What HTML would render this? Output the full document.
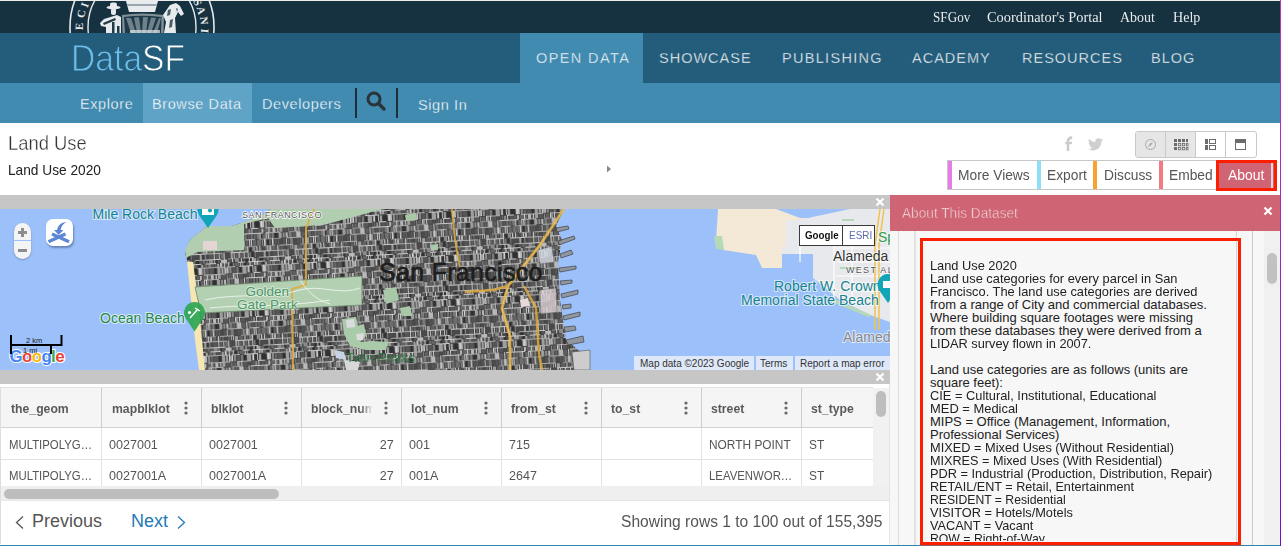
<!DOCTYPE html>
<html><head><meta charset="utf-8">
<style>
*{margin:0;padding:0;box-sizing:border-box}
html,body{width:1281px;height:546px;overflow:hidden;background:#fff}
body{position:relative;font-family:"Liberation Sans",sans-serif}
.a{position:absolute;white-space:nowrap}
#top{left:0;top:0;width:1281px;height:33px;background:#16313f}
#topline{left:0;top:0;width:1281px;height:1px;background:#e9ecee}
.tl{position:absolute;top:6px;font-family:"Liberation Serif",serif;font-size:15.3px;color:#e8ecef;line-height:22px;transform:scaleX(0.86);transform-origin:0 0}
#bar{left:0;top:33px;width:1281px;height:50px;background:#245d7b}
#sub{left:0;top:83px;width:1281px;height:40px;background:#418ab0}
.nav{position:absolute;top:49px;font-size:14.5px;letter-spacing:1.0px;color:#ffffff;line-height:18px;-webkit-text-stroke:0.35px #245d7b}
.hd{position:absolute;top:401px;font-size:13px;line-height:15px;font-weight:bold;color:#5a5a5a;overflow:hidden;white-space:nowrap;transform:scaleX(0.94);transform-origin:0 0}
.cl{position:absolute;font-size:13px;line-height:15px;color:#555;white-space:nowrap;transform-origin:0 0}
.cp{transform:scaleX(0.915)}
.el{transform:scaleX(0.875)}
.dg{transform:scaleX(0.965)}
.sn{position:absolute;top:95px;font-size:14.5px;letter-spacing:0.6px;color:#ffffff;line-height:18px;-webkit-text-stroke:0.3px #418ab0}
</style></head><body>
<div class="a" id="top"></div>

<!-- seal -->
<svg class="a" style="left:60px;top:1px" width="170" height="32" viewBox="60 1 170 32">
  <g fill="none" stroke="#e6eaec">
    <circle cx="142" cy="27" r="72" stroke-width="1.6"/>
    <circle cx="142" cy="27" r="54" stroke-width="1.4"/>
  </g>
  <g font-family="Liberation Serif" font-size="11" font-weight="bold" fill="#e6eaec" text-anchor="middle">
    <text transform="translate(79.5 26.5) rotate(-88)" y="3.5">E</text>
    <text transform="translate(81.5 14) rotate(-78)" y="3.5">C</text>
    <text transform="translate(85 5) rotate(-70)" y="3.5">I</text>
    <text transform="translate(197.5 2.5) rotate(67)" y="3.5">S</text>
    <text transform="translate(201 10.5) rotate(75)" y="3.5">A</text>
    <text transform="translate(204 20.5) rotate(84)" y="3.5">N</text>
    <text transform="translate(204.5 31) rotate(94)" y="3.5">I</text>
  </g>
  <!-- crown -->
  <path d="M126 1 L158 1 L155 12 L129 12Z" fill="#e9ecee"/>
  <path d="M127 4 L157 4 L156.5 6 L127.5 6Z" fill="#9aa6ad"/>
  <!-- shield -->
  <path d="M122 15 Q142 12 164 15 L163.5 33 L122.5 33Z" fill="#7f9099"/>
  <path d="M124 17 Q142 14.5 161.5 17 L161 33 L125 33Z" fill="#1f3a48"/>
  <g fill="#6f828c">
    <path d="M126 18 L131 18 L136 33 L131 33Z"/>
    <path d="M134 17.5 L139 17.2 L141 33 L137 33Z"/>
    <path d="M143 17 L148 17.2 L146 33 L142 33Z"/>
    <path d="M151 17.5 L156 18 L151 33 L147 33Z"/>
    <path d="M159 18 L161 18.5 L157 33 L153 33Z"/>
  </g>
  <path d="M130 30 L160 30 L160 33 L130 33Z" fill="#dfe4e7" opacity="0.7"/>
  <!-- left figure -->
  <g fill="#e6eaec">
    <ellipse cx="113.5" cy="7.5" rx="7" ry="1.8"/>
    <rect x="110" y="2.5" width="7" height="5" rx="2"/>
    <rect x="111" y="8" width="5" height="7" rx="2"/>
    <path d="M104 19 L117 15 L121 17 L121 33 L106 33 L106 27 L101 26 L100 23Z"/>
  </g>
  <g fill="#1f3a48">
    <path d="M103 23 L115 18 L116 20 L104 25Z"/>
    <rect x="112" y="22" width="2.5" height="11"/>
    <rect x="117" y="26" width="2.5" height="7"/>
  </g>
  <!-- right figure -->
  <g fill="#e6eaec">
    <path d="M163 15 L170 5 L176 3 L180 6 L184 14 L181 16 L178 12 L175 18 L176 33 L164 33 L166 22Z"/>
  </g>
  <g fill="#1f3a48" opacity="0.8">
    <path d="M168 10 L171 9 L170 15 L167 16Z"/>
    <path d="M176 8 L178 9 L177 12Z"/>
    <path d="M170 20 L173 19 L172 27 L169 28Z"/>
  </g>
</svg>
<span class="tl" style="left:933px">SFGov</span>
<span class="tl" style="left:987px;transform:scaleX(0.94)">Coordinator's Portal</span>
<span class="tl" style="left:1120px;transform:scaleX(0.91)">About</span>
<span class="tl" style="left:1173px;transform:scaleX(0.92)">Help</span>

<div class="a" id="bar"></div>
<div class="a" style="left:520px;top:33px;width:123px;height:50px;background:#418ab0"></div>
<span class="a" style="left:71px;top:37px;font-size:36px;line-height:44px;color:#6cbde8;transform:scaleX(0.935);transform-origin:0 0;-webkit-text-stroke:0.9px #245d7b">Data<span style="color:#fff">SF</span></span>
<span class="nav" style="left:536px;letter-spacing:1.4px;-webkit-text-stroke:0.35px #418ab0">OPEN DATA</span>
<span class="nav" style="left:659px">SHOWCASE</span>
<span class="nav" style="left:782px;letter-spacing:1.3px">PUBLISHING</span>
<span class="nav" style="left:912px">ACADEMY</span>
<span class="nav" style="left:1022px">RESOURCES</span>
<span class="nav" style="left:1151px">BLOG</span>

<div class="a" id="sub"></div>
<div class="a" style="left:143px;top:83px;width:109px;height:40px;background:#5fa3c6"></div>
<span class="sn" style="left:80px">Explore</span>
<span class="sn" style="left:152px;-webkit-text-stroke:0.3px #5fa3c6">Browse Data</span>
<span class="sn" style="left:262px">Developers</span>
<div class="a" style="left:355px;top:88px;width:2px;height:30px;background:#1d2f38"></div>
<div class="a" style="left:396px;top:88px;width:2px;height:30px;background:#1d2f38"></div>
<svg class="a" style="left:366px;top:91px" width="21" height="20" viewBox="0 0 21 20">
  <circle cx="8" cy="8" r="6" fill="none" stroke="#2a3338" stroke-width="3"/>
  <line x1="12.5" y1="12.5" x2="18" y2="18" stroke="#2a3338" stroke-width="3.2" stroke-linecap="round"/>
</svg>
<span class="sn" style="left:418px;top:96px">Sign In</span>


<!-- title -->
<span class="a" style="left:8px;top:132px;font-size:20.8px;line-height:22px;color:#333;-webkit-text-stroke:0.35px #fff;transform:scaleX(0.885);transform-origin:0 0">Land Use</span>
<span class="a" style="left:8px;top:160.5px;font-size:14.5px;line-height:18px;color:#222;transform:scaleX(0.945);transform-origin:0 0">Land Use 2020</span>
<svg class="a" style="left:606px;top:165px" width="6" height="8"><path d="M1 0.5 L5 4 L1 7.5Z" fill="#8a8a8a"/></svg>

<!-- share icons -->
<svg class="a" style="left:1064px;top:136px" width="10" height="16" viewBox="0 0 10 16"><path d="M4 15 L4 5.5 C4 2.8 5.3 1.6 8.2 1.6" fill="none" stroke="#cccccc" stroke-width="2.6"/><path d="M1.2 7 L8 7" stroke="#cccccc" stroke-width="2.4"/></svg>
<svg class="a" style="left:1088px;top:138px" width="15" height="13" viewBox="0 0 24 20"><path fill="#cfcfcf" d="M24 2.4c-.9.4-1.8.6-2.8.8 1-.6 1.8-1.6 2.2-2.7-1 .6-2 1-3.1 1.2C19.4.7 18.1 0 16.6 0c-2.7 0-4.9 2.2-4.9 4.9 0 .4 0 .8.1 1.1C7.7 5.8 4.1 3.9 1.7.9c-.4.7-.7 1.6-.7 2.5 0 1.7.9 3.2 2.2 4.1-.8 0-1.6-.2-2.2-.6v.1c0 2.4 1.7 4.4 3.9 4.8-.4.1-.8.2-1.3.2-.3 0-.6 0-.9-.1.6 2 2.4 3.4 4.6 3.4-1.7 1.3-3.8 2.1-6.1 2.1-.4 0-.8 0-1.2-.1 2.2 1.4 4.8 2.2 7.5 2.2 9.1 0 14-7.5 14-14v-.6c1-.7 1.8-1.6 2.5-2.5z"/></svg>

<!-- view toggles -->
<div class="a" style="left:1135px;top:131px;width:122px;height:27px;border:1px solid #c9c9c9;border-radius:3px;background:#fff;overflow:hidden">
  <div class="a" style="left:0;top:0;width:30px;height:25px;background:#e6e6e6;border-right:1px solid #c9c9c9"></div>
  <div class="a" style="left:30px;top:0;width:30px;height:25px;background:#e6e6e6;border-right:1px solid #c9c9c9"></div>
  <div class="a" style="left:60px;top:0;width:30px;height:25px;border-right:1px solid #c9c9c9"></div>
</div>
<svg class="a" style="left:1135px;top:131px" width="122" height="27" viewBox="1135 131 122 27">
  <g fill="none" stroke="#a9a9a9" stroke-width="1">
    <circle cx="1150.5" cy="144.5" r="5"/>
  </g>
  <path d="M1153 142 L1151 145.5 L1148 147 L1150 143.5Z" fill="#a9a9a9"/>
  <g fill="#6b6b6b">
    <rect x="1174" y="139" width="3" height="3"/><rect x="1178" y="139" width="3" height="3"/><rect x="1182" y="139" width="3" height="3"/><rect x="1186" y="139" width="2" height="3"/>
    <rect x="1174" y="143" width="3" height="3"/><rect x="1174" y="147" width="3" height="3"/>
  </g>
  <g fill="none" stroke="#6b6b6b" stroke-width="0.8">
    <rect x="1178.4" y="143.4" width="2.4" height="2.4"/><rect x="1182.4" y="143.4" width="2.4" height="2.4"/><rect x="1186.4" y="143.4" width="1.6" height="2.4"/>
    <rect x="1178.4" y="147.4" width="2.4" height="2.4"/><rect x="1182.4" y="147.4" width="2.4" height="2.4"/><rect x="1186.4" y="147.4" width="1.6" height="2.4"/>
  </g>
  <g fill="#6b6b6b"><rect x="1205" y="139" width="3" height="5"/><rect x="1205" y="145" width="3" height="5"/></g>
  <g fill="none" stroke="#6b6b6b" stroke-width="1"><rect x="1209.5" y="139.5" width="6" height="4"/><rect x="1209.5" y="145.5" width="6" height="4"/></g>
  <rect x="1235" y="139" width="11" height="3" fill="#6b6b6b"/>
  <rect x="1235.5" y="142.5" width="10" height="7" fill="none" stroke="#6b6b6b" stroke-width="1"/>
</svg>

<!-- action buttons -->
<div class="a" style="left:947px;top:160px;width:330px;height:30px;border:1px solid #c6c6c6;background:#fff"></div>
<div class="a" style="left:948px;top:161px;width:4px;height:28px;background:#e67de6"></div>
<div class="a" style="left:1037px;top:161px;width:4px;height:28px;background:#8de0f7"></div>
<div class="a" style="left:1093px;top:161px;width:4px;height:28px;background:#f7a233"></div>
<div class="a" style="left:1159px;top:161px;width:4px;height:28px;background:#f27a80"></div>
<span class="a" style="left:958px;top:166px;font-size:14.5px;line-height:18px;color:#555;transform:scaleX(0.95);transform-origin:0 0">More Views</span>
<span class="a" style="left:1047px;top:166px;font-size:14.5px;line-height:18px;color:#555;transform:scaleX(0.95);transform-origin:0 0">Export</span>
<span class="a" style="left:1104px;top:166px;font-size:14.5px;line-height:18px;color:#555;transform:scaleX(0.95);transform-origin:0 0">Discuss</span>
<span class="a" style="left:1169px;top:166px;font-size:14.5px;line-height:18px;color:#555;transform:scaleX(0.95);transform-origin:0 0">Embed</span>
<div class="a" style="left:1216px;top:160px;width:61px;height:31px;border:3px solid #fb1f00;background:#cf6574"></div>
<div class="a" style="left:1271px;top:163px;width:2px;height:25px;background:#d9d9d9"></div>
<span class="a" style="left:1228px;top:166px;font-size:14.5px;line-height:18px;color:#fff;transform:scaleX(0.96);transform-origin:0 0">About</span>


<!-- grey bars -->
<div class="a" style="left:0;top:195px;width:890px;height:14px;background:#c6c6c6"></div>
<div class="a" style="left:0;top:370px;width:890px;height:14px;background:#c6c6c6"></div>
<svg class="a" style="left:875px;top:197px" width="10" height="10" viewBox="0 0 10 10"><path d="M1.5 1.5L8.5 8.5M8.5 1.5L1.5 8.5" stroke="#fff" stroke-width="2.2"/></svg>
<svg class="a" style="left:875px;top:372px" width="10" height="10" viewBox="0 0 10 10"><path d="M1.5 1.5L8.5 8.5M8.5 1.5L1.5 8.5" stroke="#fff" stroke-width="2.2"/></svg>

<!-- map -->
<svg class="a" style="left:0;top:209px" width="890" height="161" viewBox="0 209 890 161">
  <defs>
    <pattern id="grid" width="64" height="44" patternUnits="userSpaceOnUse" patternTransform="rotate(-3)"><rect width="64" height="44" fill="#474747"/><rect x="0" y="0" width="17" height="1" fill="#d4d4d4" opacity="0.7"/><rect x="25" y="0" width="17" height="1" fill="#d4d4d4" opacity="0.9"/><rect x="49" y="0" width="20" height="1" fill="#d4d4d4" opacity="0.9"/><rect x="0" y="1" width="2" height="5" fill="#4a4a4a"/><rect x="3" y="1" width="4" height="5" fill="#565656"/><rect x="8" y="1" width="1" height="5" fill="#6e6e6e"/><rect x="10" y="1" width="2" height="5" fill="#606060"/><rect x="13" y="1" width="1" height="5" fill="#b8b8b8"/><rect x="15" y="1" width="3" height="5" fill="#6e6e6e"/><rect x="19" y="1" width="3" height="5" fill="#4a4a4a"/><rect x="23" y="1" width="1" height="5" fill="#4a4a4a"/><rect x="25" y="1" width="2" height="5" fill="#9e9e9e"/><rect x="28" y="1" width="1" height="5" fill="#b8b8b8"/><rect x="30" y="1" width="1" height="5" fill="#6e6e6e"/><rect x="32" y="1" width="1" height="5" fill="#666666"/><rect x="34" y="1" width="3" height="5" fill="#606060"/><rect x="38" y="1" width="1" height="5" fill="#8a8a8a"/><rect x="40" y="1" width="1" height="5" fill="#565656"/><rect x="42" y="1" width="1" height="5" fill="#4a4a4a"/><rect x="44" y="1" width="1" height="5" fill="#8a8a8a"/><rect x="46" y="1" width="2" height="5" fill="#303030"/><rect x="49" y="1" width="1" height="5" fill="#7a7a7a"/><rect x="51" y="1" width="4" height="5" fill="#4a4a4a"/><rect x="56" y="1" width="1" height="5" fill="#4a4a4a"/><rect x="58" y="1" width="2" height="5" fill="#9e9e9e"/><rect x="61" y="1" width="1" height="5" fill="#303030"/><rect x="63" y="1" width="2" height="5" fill="#8a8a8a"/><rect x="18" y="0" width="1" height="6" fill="#dcdcdc" opacity="0.8"/><rect x="33" y="0" width="1" height="6" fill="#dcdcdc" opacity="0.8"/><rect x="8" y="0" width="1" height="6" fill="#dcdcdc" opacity="0.8"/><rect x="42" y="0" width="1" height="6" fill="#dcdcdc" opacity="0.8"/><rect x="38" y="0" width="1" height="6" fill="#dcdcdc" opacity="0.8"/><rect x="0" y="6" width="15" height="1" fill="#d4d4d4" opacity="0.9"/><rect x="22" y="6" width="11" height="1" fill="#d4d4d4" opacity="0.5"/><rect x="37" y="6" width="11" height="1" fill="#d4d4d4" opacity="0.7"/><rect x="53" y="6" width="17" height="1" fill="#d4d4d4" opacity="0.7"/><rect x="0" y="7" width="2" height="3" fill="#606060"/><rect x="3" y="7" width="4" height="3" fill="#8a8a8a"/><rect x="8" y="7" width="1" height="3" fill="#9e9e9e"/><rect x="10" y="7" width="1" height="3" fill="#303030"/><rect x="12" y="7" width="2" height="3" fill="#565656"/><rect x="15" y="7" width="3" height="3" fill="#b8b8b8"/><rect x="19" y="7" width="2" height="3" fill="#b8b8b8"/><rect x="22" y="7" width="3" height="3" fill="#565656"/><rect x="26" y="7" width="2" height="3" fill="#565656"/><rect x="29" y="7" width="4" height="3" fill="#8a8a8a"/><rect x="34" y="7" width="3" height="3" fill="#4a4a4a"/><rect x="38" y="7" width="1" height="3" fill="#4a4a4a"/><rect x="40" y="7" width="2" height="3" fill="#303030"/><rect x="43" y="7" width="3" height="3" fill="#303030"/><rect x="47" y="7" width="3" height="3" fill="#9e9e9e"/><rect x="51" y="7" width="2" height="3" fill="#6e6e6e"/><rect x="54" y="7" width="3" height="3" fill="#303030"/><rect x="58" y="7" width="2" height="3" fill="#565656"/><rect x="61" y="7" width="2" height="3" fill="#6e6e6e"/><rect x="26" y="6" width="1" height="4" fill="#dcdcdc" opacity="0.8"/><rect x="43" y="6" width="1" height="4" fill="#dcdcdc" opacity="0.8"/><rect x="46" y="6" width="1" height="4" fill="#dcdcdc" opacity="0.8"/><rect x="18" y="6" width="1" height="4" fill="#dcdcdc" opacity="0.8"/><rect x="35" y="6" width="1" height="4" fill="#dcdcdc" opacity="0.8"/><rect x="0" y="10" width="10" height="1" fill="#d4d4d4" opacity="0.9"/><rect x="14" y="10" width="10" height="1" fill="#d4d4d4" opacity="0.5"/><rect x="32" y="10" width="7" height="1" fill="#d4d4d4" opacity="0.9"/><rect x="42" y="10" width="17" height="1" fill="#d4d4d4" opacity="0.9"/><rect x="63" y="10" width="13" height="1" fill="#d4d4d4" opacity="0.5"/><rect x="0" y="11" width="1" height="3" fill="#6e6e6e"/><rect x="2" y="11" width="3" height="3" fill="#7a7a7a"/><rect x="6" y="11" width="2" height="3" fill="#565656"/><rect x="9" y="11" width="1" height="3" fill="#666666"/><rect x="11" y="11" width="2" height="3" fill="#9e9e9e"/><rect x="14" y="11" width="2" height="3" fill="#b8b8b8"/><rect x="17" y="11" width="1" height="3" fill="#565656"/><rect x="19" y="11" width="4" height="3" fill="#565656"/><rect x="24" y="11" width="2" height="3" fill="#303030"/><rect x="27" y="11" width="1" height="3" fill="#8a8a8a"/><rect x="29" y="11" width="4" height="3" fill="#666666"/><rect x="34" y="11" width="1" height="3" fill="#b8b8b8"/><rect x="36" y="11" width="1" height="3" fill="#8a8a8a"/><rect x="38" y="11" width="2" height="3" fill="#303030"/><rect x="41" y="11" width="1" height="3" fill="#565656"/><rect x="43" y="11" width="2" height="3" fill="#9e9e9e"/><rect x="46" y="11" width="1" height="3" fill="#606060"/><rect x="48" y="11" width="3" height="3" fill="#8a8a8a"/><rect x="52" y="11" width="3" height="3" fill="#606060"/><rect x="56" y="11" width="2" height="3" fill="#303030"/><rect x="59" y="11" width="2" height="3" fill="#9e9e9e"/><rect x="62" y="11" width="2" height="3" fill="#606060"/><rect x="51" y="10" width="1" height="4" fill="#dcdcdc" opacity="0.8"/><rect x="18" y="10" width="1" height="4" fill="#dcdcdc" opacity="0.8"/><rect x="14" y="10" width="1" height="4" fill="#dcdcdc" opacity="0.8"/><rect x="48" y="10" width="1" height="4" fill="#dcdcdc" opacity="0.8"/><rect x="22" y="10" width="1" height="4" fill="#dcdcdc" opacity="0.8"/><rect x="0" y="14" width="19" height="1" fill="#d4d4d4" opacity="0.7"/><rect x="22" y="14" width="7" height="1" fill="#d4d4d4" opacity="0.7"/><rect x="33" y="14" width="14" height="1" fill="#d4d4d4" opacity="0.9"/><rect x="55" y="14" width="14" height="1" fill="#d4d4d4" opacity="0.7"/><rect x="0" y="15" width="2" height="6" fill="#666666"/><rect x="3" y="15" width="4" height="6" fill="#565656"/><rect x="8" y="15" width="2" height="6" fill="#303030"/><rect x="11" y="15" width="3" height="6" fill="#9e9e9e"/><rect x="15" y="15" width="2" height="6" fill="#9e9e9e"/><rect x="18" y="15" width="4" height="6" fill="#9e9e9e"/><rect x="23" y="15" width="2" height="6" fill="#8a8a8a"/><rect x="26" y="15" width="3" height="6" fill="#565656"/><rect x="30" y="15" width="2" height="6" fill="#7a7a7a"/><rect x="33" y="15" width="2" height="6" fill="#303030"/><rect x="36" y="15" width="4" height="6" fill="#9e9e9e"/><rect x="41" y="15" width="2" height="6" fill="#9e9e9e"/><rect x="44" y="15" width="3" height="6" fill="#303030"/><rect x="48" y="15" width="2" height="6" fill="#9e9e9e"/><rect x="51" y="15" width="4" height="6" fill="#303030"/><rect x="56" y="15" width="4" height="6" fill="#b8b8b8"/><rect x="61" y="15" width="2" height="6" fill="#8a8a8a"/><rect x="57" y="14" width="1" height="7" fill="#dcdcdc" opacity="0.8"/><rect x="46" y="14" width="1" height="7" fill="#dcdcdc" opacity="0.8"/><rect x="42" y="14" width="1" height="7" fill="#dcdcdc" opacity="0.8"/><rect x="18" y="14" width="1" height="7" fill="#dcdcdc" opacity="0.8"/><rect x="21" y="14" width="1" height="7" fill="#dcdcdc" opacity="0.8"/><rect x="0" y="21" width="19" height="1" fill="#d4d4d4" opacity="0.7"/><rect x="27" y="21" width="13" height="1" fill="#d4d4d4" opacity="0.7"/><rect x="47" y="21" width="7" height="1" fill="#d4d4d4" opacity="0.9"/><rect x="61" y="21" width="17" height="1" fill="#d4d4d4" opacity="0.7"/><rect x="0" y="22" width="3" height="4" fill="#666666"/><rect x="4" y="22" width="3" height="4" fill="#b8b8b8"/><rect x="8" y="22" width="2" height="4" fill="#666666"/><rect x="11" y="22" width="3" height="4" fill="#9e9e9e"/><rect x="15" y="22" width="4" height="4" fill="#565656"/><rect x="20" y="22" width="1" height="4" fill="#8a8a8a"/><rect x="22" y="22" width="3" height="4" fill="#606060"/><rect x="26" y="22" width="3" height="4" fill="#8a8a8a"/><rect x="30" y="22" width="1" height="4" fill="#8a8a8a"/><rect x="32" y="22" width="4" height="4" fill="#565656"/><rect x="37" y="22" width="2" height="4" fill="#4a4a4a"/><rect x="40" y="22" width="1" height="4" fill="#565656"/><rect x="42" y="22" width="1" height="4" fill="#6e6e6e"/><rect x="44" y="22" width="2" height="4" fill="#8a8a8a"/><rect x="47" y="22" width="2" height="4" fill="#4a4a4a"/><rect x="50" y="22" width="3" height="4" fill="#565656"/><rect x="54" y="22" width="2" height="4" fill="#606060"/><rect x="57" y="22" width="2" height="4" fill="#b8b8b8"/><rect x="60" y="22" width="4" height="4" fill="#666666"/><rect x="9" y="21" width="1" height="5" fill="#dcdcdc" opacity="0.8"/><rect x="26" y="21" width="1" height="5" fill="#dcdcdc" opacity="0.8"/><rect x="30" y="21" width="1" height="5" fill="#dcdcdc" opacity="0.8"/><rect x="47" y="21" width="1" height="5" fill="#dcdcdc" opacity="0.8"/><rect x="0" y="21" width="1" height="5" fill="#dcdcdc" opacity="0.8"/><rect x="0" y="26" width="12" height="1" fill="#d4d4d4" opacity="0.7"/><rect x="20" y="26" width="12" height="1" fill="#d4d4d4" opacity="0.5"/><rect x="39" y="26" width="19" height="1" fill="#d4d4d4" opacity="0.9"/><rect x="62" y="26" width="6" height="1" fill="#d4d4d4" opacity="0.9"/><rect x="0" y="27" width="2" height="5" fill="#6e6e6e"/><rect x="3" y="27" width="2" height="5" fill="#7a7a7a"/><rect x="6" y="27" width="3" height="5" fill="#303030"/><rect x="10" y="27" width="3" height="5" fill="#9e9e9e"/><rect x="14" y="27" width="2" height="5" fill="#8a8a8a"/><rect x="17" y="27" width="2" height="5" fill="#b8b8b8"/><rect x="20" y="27" width="3" height="5" fill="#7a7a7a"/><rect x="24" y="27" width="2" height="5" fill="#606060"/><rect x="27" y="27" width="1" height="5" fill="#8a8a8a"/><rect x="29" y="27" width="3" height="5" fill="#b8b8b8"/><rect x="33" y="27" width="3" height="5" fill="#606060"/><rect x="37" y="27" width="1" height="5" fill="#8a8a8a"/><rect x="39" y="27" width="3" height="5" fill="#6e6e6e"/><rect x="43" y="27" width="2" height="5" fill="#565656"/><rect x="46" y="27" width="2" height="5" fill="#6e6e6e"/><rect x="49" y="27" width="2" height="5" fill="#666666"/><rect x="52" y="27" width="3" height="5" fill="#7a7a7a"/><rect x="56" y="27" width="1" height="5" fill="#303030"/><rect x="58" y="27" width="4" height="5" fill="#666666"/><rect x="63" y="27" width="2" height="5" fill="#b8b8b8"/><rect x="55" y="26" width="1" height="6" fill="#dcdcdc" opacity="0.8"/><rect x="28" y="26" width="1" height="6" fill="#dcdcdc" opacity="0.8"/><rect x="63" y="26" width="1" height="6" fill="#dcdcdc" opacity="0.8"/><rect x="37" y="26" width="1" height="6" fill="#dcdcdc" opacity="0.8"/><rect x="61" y="26" width="1" height="6" fill="#dcdcdc" opacity="0.8"/><rect x="0" y="32" width="12" height="1" fill="#d4d4d4" opacity="0.5"/><rect x="18" y="32" width="15" height="1" fill="#d4d4d4" opacity="0.7"/><rect x="40" y="32" width="10" height="1" fill="#d4d4d4" opacity="0.7"/><rect x="54" y="32" width="12" height="1" fill="#d4d4d4" opacity="0.5"/><rect x="0" y="33" width="2" height="6" fill="#606060"/><rect x="3" y="33" width="2" height="6" fill="#8a8a8a"/><rect x="6" y="33" width="2" height="6" fill="#565656"/><rect x="9" y="33" width="1" height="6" fill="#666666"/><rect x="11" y="33" width="2" height="6" fill="#4a4a4a"/><rect x="14" y="33" width="2" height="6" fill="#565656"/><rect x="17" y="33" width="1" height="6" fill="#b8b8b8"/><rect x="19" y="33" width="1" height="6" fill="#606060"/><rect x="21" y="33" width="3" height="6" fill="#7a7a7a"/><rect x="25" y="33" width="2" height="6" fill="#4a4a4a"/><rect x="28" y="33" width="2" height="6" fill="#565656"/><rect x="31" y="33" width="1" height="6" fill="#606060"/><rect x="33" y="33" width="2" height="6" fill="#8a8a8a"/><rect x="36" y="33" width="4" height="6" fill="#9e9e9e"/><rect x="41" y="33" width="2" height="6" fill="#606060"/><rect x="44" y="33" width="3" height="6" fill="#606060"/><rect x="48" y="33" width="3" height="6" fill="#666666"/><rect x="52" y="33" width="4" height="6" fill="#6e6e6e"/><rect x="57" y="33" width="1" height="6" fill="#8a8a8a"/><rect x="59" y="33" width="2" height="6" fill="#9e9e9e"/><rect x="62" y="33" width="3" height="6" fill="#303030"/><rect x="37" y="32" width="1" height="7" fill="#dcdcdc" opacity="0.8"/><rect x="3" y="32" width="1" height="7" fill="#dcdcdc" opacity="0.8"/><rect x="59" y="32" width="1" height="7" fill="#dcdcdc" opacity="0.8"/><rect x="44" y="32" width="1" height="7" fill="#dcdcdc" opacity="0.8"/><rect x="46" y="32" width="1" height="7" fill="#dcdcdc" opacity="0.8"/><rect x="0" y="39" width="6" height="1" fill="#d4d4d4" opacity="0.5"/><rect x="10" y="39" width="14" height="1" fill="#d4d4d4" opacity="0.7"/><rect x="31" y="39" width="20" height="1" fill="#d4d4d4" opacity="0.5"/><rect x="58" y="39" width="14" height="1" fill="#d4d4d4" opacity="0.5"/><rect x="0" y="40" width="2" height="4" fill="#b8b8b8"/><rect x="3" y="40" width="3" height="4" fill="#666666"/><rect x="7" y="40" width="4" height="4" fill="#606060"/><rect x="12" y="40" width="2" height="4" fill="#606060"/><rect x="15" y="40" width="2" height="4" fill="#4a4a4a"/><rect x="18" y="40" width="2" height="4" fill="#606060"/><rect x="21" y="40" width="1" height="4" fill="#9e9e9e"/><rect x="23" y="40" width="1" height="4" fill="#b8b8b8"/><rect x="25" y="40" width="3" height="4" fill="#9e9e9e"/><rect x="29" y="40" width="4" height="4" fill="#606060"/><rect x="34" y="40" width="2" height="4" fill="#8a8a8a"/><rect x="37" y="40" width="1" height="4" fill="#606060"/><rect x="39" y="40" width="4" height="4" fill="#7a7a7a"/><rect x="44" y="40" width="2" height="4" fill="#303030"/><rect x="47" y="40" width="3" height="4" fill="#8a8a8a"/><rect x="51" y="40" width="2" height="4" fill="#666666"/><rect x="54" y="40" width="3" height="4" fill="#565656"/><rect x="58" y="40" width="1" height="4" fill="#4a4a4a"/><rect x="60" y="40" width="2" height="4" fill="#6e6e6e"/><rect x="63" y="40" width="1" height="4" fill="#565656"/><rect x="42" y="39" width="1" height="5" fill="#dcdcdc" opacity="0.8"/><rect x="54" y="39" width="1" height="5" fill="#dcdcdc" opacity="0.8"/><rect x="8" y="39" width="1" height="5" fill="#dcdcdc" opacity="0.8"/><rect x="51" y="39" width="1" height="5" fill="#dcdcdc" opacity="0.8"/><rect x="62" y="39" width="1" height="5" fill="#dcdcdc" opacity="0.8"/></pattern>
  </defs>
  <rect x="0" y="209" width="890" height="161" fill="#9cc0f9"/>
  <!-- Alameda -->
  <path d="M718 209 L776 209 L800 218 L808 218 L808 222 L782 222 L782 268 L762 268 L756 255 L723 250 L716 240Z" fill="#f3e9d6"/>
  <path d="M782 222 L808 218 L850 209 L890 209 L890 322 L870 315 L840 300 L822 285 L813 278 L813 254 L782 254Z" fill="#e8e9ec"/>
  <path d="M779 220 L786 220 L786 246 L779 246Z" fill="#f3e9d6"/>
  <path d="M714 236 L722 236 L724 250 L716 249Z" fill="#b6d9b8"/>
  <path d="M842 220 L854 220" stroke="#b6d9b8" stroke-width="2"/>
  <g stroke="#fff" stroke-width="1.2" fill="none">
    <path d="M835 248 L890 248 M838 262 L890 262 M836 276 L890 276 M840 290 L890 292 M834 232 L834 300 M852 240 L852 300 M800 262 L800 240 M812 235 L860 232"/>
  </g>
  <path d="M880 209 L875 245 L875 330 M884 209 L879 245 L879 330" stroke="#f2c14e" stroke-width="1.5" fill="none"/>
  <path d="M832 300 L870 316" stroke="#b6d9b8" stroke-width="3"/>
  <path d="M840 268 L856 268" stroke="#b6d9b8" stroke-width="2"/>
  <!-- SF land -->
  <path d="M270 209 L564 209 L556 226 L562 240 L558 262 L560 300 L566 340 L586 356 L588 370 L200 370 L196 340 L192 300 L188 265 L185 253 L190 240 L207 226 L232 226 L244 222 L262 215Z" fill="url(#grid)"/>
  
  <!-- presidio -->
  <path d="M207 226 L232 226 L244 222 L262 215 L270 209 L383 209 L323 225 L275 228 L268 218 L244 224 L244 250 L197 252 L186 258 L185 250 L190 240Z" fill="#b1cfb0"/>
  <rect x="203" y="241" width="14" height="9" fill="#e5d4d4"/>
  <!-- beach -->
  <path d="M187 262 L193 262 L198 300 L202 340 L205 370 L199 370 L195 340 L191 300Z" fill="#f6e7b3"/>
  <!-- GG park -->
  <path d="M195 287 L362 276 L362 305 L201 313Z" fill="#b3d0b2"/>
  <!-- green patches -->
  <path d="M383 290 L396 287 L399 300 L386 304Z" fill="#a9c8a8"/>
  <path d="M400 308 L410 306 L412 316 L402 316Z" fill="#a9c8a8"/>
  <path d="M342 319 L356 317 L358 326 L364 324 L366 336 L360 342 L372 341 L388 342 L386 350 L366 350 L350 346 L344 334Z" fill="#a9cba9"/>
  <path d="M346 320 L354 319 L355 327 L347 328Z" fill="#dcdcdc"/>
  <path d="M356 334 L364 333 L363 340 L357 340Z" fill="#dcdcdc"/>
  <path d="M334 350 L344 352 L346 360 L336 358Z" fill="#c9d3e6"/>
  <path d="M344 360 L360 362 L358 370 L346 370Z" fill="#d8d8d8"/>
  <path d="M405 215 L416 213 L417 220 L406 221Z" fill="#a9c8a8"/>
  <path d="M430 245 L438 244 L438 250 L431 251Z" fill="#a9c8a8"/>
  <path d="M520 300 L528 298 L530 306 L521 307Z" fill="#e8d9d9"/>
  <text x="346" y="362.3" font-family="Liberation Sans" font-size="13.5" fill="#2a7a3e" opacity="0.85">Twin Peaks</text>
  <!-- highways -->
  <g fill="none" stroke-linejoin="round" opacity="0.85">
    <path d="M314 209 L306 228 L306 285 L292 289 L293 370" stroke="#e0ac3e" stroke-width="2"/>
    <path d="M452 209 L455 240 L460 268" stroke="#e0ac3e" stroke-width="1.8"/>
    <path d="M564 209 L540 245 L508 286 L502 308 L510 336 L510 370" stroke="#e0ac3e" stroke-width="3"/>
    <path d="M564 209 L540 245 L508 286 L502 308 L510 336 L510 370" stroke="#f6d27a" stroke-width="1"/>
    <path d="M465 292 L493 290 L508 286" stroke="#e0ac3e" stroke-width="2.5"/>
    <path d="M524 286 L536 308 L539 354 L542 370" stroke="#e0ac3e" stroke-width="2.5"/>
  </g>
  <!-- piers -->
  <g fill="#8f8f8f" stroke="#3a3a3a" stroke-width="0.8" opacity="0.85">
    <path d="M556 228 L568 226 L569 229 L557 232Z"/>
    <path d="M558 241 L574 236 L575 239 L559 245Z"/>
    <path d="M560 254 L571 250 L573 254 L561 258Z"/>
    <path d="M559 268 L576 266 L576 269 L560 272Z"/>
    <path d="M560 281 L572 280 L572 283 L561 285Z"/>
    <path d="M561 294 L578 290 L578 294 L562 298Z"/>
    <path d="M562 305 L571 304 L571 308 L563 309Z"/>
    <path d="M563 316 L580 312 L580 316 L564 320Z"/>
    <path d="M564 327 L575 326 L576 330 L565 332Z"/>
    <path d="M566 340 L583 336 L584 342 L568 345Z"/>
  </g>
  <path d="M572 352 L590 350 L590 370 L574 370Z" fill="#cdcdcd" stroke="#555" stroke-width="0.6"/>
  
  <g fill="#d9cfd2" stroke="#555" stroke-width="0.5" opacity="0.8">
    <path d="M540 290 L556 288 L557 312 L541 314Z"/>
    <path d="M538 250 L552 246 L554 262 L540 264Z" fill="#d6dbe6"/>
  </g>
  <g stroke="#fff" stroke-width="1" fill="none" opacity="0.7">
    <path d="M205 300 C240 292 270 300 300 290 C320 284 340 296 360 288"/>
    <path d="M210 308 C250 304 280 308 330 300"/>
    <path d="M300 280 C310 295 318 300 330 304"/>
  </g>
  <path d="M195 287 L362 276 L362 305 L201 313Z" fill="none" stroke="#6f8a6f" stroke-width="0.8"/>
  <!-- labels -->
  <text x="379" y="281.3" font-family="Liberation Sans" font-size="25" fill="#1e1e1e" stroke="#1e1e1e" stroke-width="0.7" letter-spacing="0.3">San Francisco</text>
  <text x="242" y="217.5" font-family="Liberation Sans" font-size="9" fill="#555" stroke="#fff" stroke-width="1.5" paint-order="stroke" letter-spacing="0.45">SAN FRANCISCO</text>
  <text x="245.5" y="295.5" font-family="Liberation Sans" font-size="13.5" fill="#4a9766" stroke="rgba(255,255,255,0.45)" stroke-width="1.8" paint-order="stroke">Golden</text>
  <text x="237" y="309" font-family="Liberation Sans" font-size="13.5" fill="#4a9766" stroke="rgba(255,255,255,0.45)" stroke-width="1.8" paint-order="stroke">Gate Park</text>
  <text x="92.5" y="219" font-family="Liberation Sans" font-size="14" fill="#15838f" stroke="rgba(255,255,255,0.6)" stroke-width="2.2" paint-order="stroke">Mile Rock Beach</text>
  <text x="100" y="323" font-family="Liberation Sans" font-size="14" fill="#1f8a47" stroke="rgba(255,255,255,0.6)" stroke-width="2.2" paint-order="stroke">Ocean Beach</text>
  <text x="833" y="260.7" font-family="Liberation Sans" font-size="14" fill="#333" stroke="rgba(255,255,255,0.7)" stroke-width="2" paint-order="stroke">Alameda</text>
  <text x="846" y="272.5" font-family="Liberation Sans" font-size="9" fill="#555" letter-spacing="1.3" stroke="rgba(255,255,255,0.7)" stroke-width="1.5" paint-order="stroke">WEST ALA</text>
  <text x="774" y="290.5" font-family="Liberation Sans" font-size="14" fill="#15838f" stroke="rgba(255,255,255,0.6)" stroke-width="2.2" paint-order="stroke">Robert W. Crown</text>
  <text x="741" y="305.3" font-family="Liberation Sans" font-size="14" fill="#15838f" stroke="rgba(255,255,255,0.6)" stroke-width="2.2" paint-order="stroke">Memorial State Beach</text>
  <text x="843" y="342" font-family="Liberation Sans" font-size="14" fill="#8a8a8a" stroke="rgba(255,255,255,0.6)" stroke-width="2" paint-order="stroke">Alameda</text>
  <text x="878" y="242" font-family="Liberation Sans" font-size="14" fill="#2e9a52" stroke="rgba(255,255,255,0.6)" stroke-width="2" paint-order="stroke">Sp</text>
  <!-- pins -->
  <path d="M208 228 L199 215 A10.5 10.5 0 1 1 217 215Z" fill="#12a5b8"/>
  <rect x="202" y="209" width="12" height="6" fill="#fff"/><circle cx="210" cy="210.5" r="2" fill="#12a5b8"/>
  <path d="M194.5 331.5 L185.5 318 A10.5 10.5 0 1 1 203.5 318Z" fill="#2ea653" opacity="0.92"/><circle cx="189.5" cy="312.5" r="1.6" fill="#fff"/><path d="M190 318 L198 309 M195 308 L200 311" stroke="#fff" stroke-width="1.3"/>
  <path d="M888 303 L879 290 A10.5 10.5 0 1 1 897 290Z" fill="#12a5b8"/><rect x="883" y="281" width="8" height="7" fill="#fff"/>
  <!-- scale & logo -->
  <text x="9.5" y="362" font-family="Liberation Sans" font-size="17" font-weight="bold" stroke="#fff" stroke-width="2" paint-order="stroke" letter-spacing="-0.7"><tspan fill="#4285f4">G</tspan><tspan fill="#ea4335">o</tspan><tspan fill="#fbbc05">o</tspan><tspan fill="#4285f4">g</tspan><tspan fill="#34a853">l</tspan><tspan fill="#ea4335">e</tspan></text>
  <path d="M11 335 L11 354 M10 345 L62 345 M61.5 335 L61.5 346 M51 345 L51 354" stroke="#000" stroke-width="2" fill="none"/>
  <text x="26" y="342.5" font-family="Liberation Sans" font-size="7.5" fill="#222">2 km</text>
  <text x="23" y="353" font-family="Liberation Sans" font-size="7.5" fill="#222">1 mi</text>
  <!-- attribution -->
  <rect x="634" y="356" width="120" height="14" fill="#e6ecf7" opacity="0.9"/>
  <rect x="756" y="356" width="37" height="14" fill="#e6ecf7" opacity="0.9"/>
  <rect x="795" y="356" width="95" height="14" fill="#e6ecf7" opacity="0.9"/>
  <text x="640" y="367" font-family="Liberation Sans" font-size="10" fill="#333">Map data ©2023 Google</text>
  <text x="760" y="367" font-family="Liberation Sans" font-size="10" fill="#333">Terms</text>
  <text x="800" y="367" font-family="Liberation Sans" font-size="10" fill="#333">Report a map error</text>
</svg>
<!-- map controls -->
<div class="a" style="left:14px;top:223px;width:17px;height:36px;border-radius:9px;background:#f4f4f4;box-shadow:0 1px 2px rgba(0,0,0,.25)"></div>
<div class="a" style="left:14px;top:240px;width:17px;height:1px;background:#9cc0f9"></div>
<div class="a" style="left:18px;top:231px;width:9px;height:3px;background:#8d8d8d"></div>
<div class="a" style="left:21px;top:228px;width:3px;height:9px;background:#8d8d8d"></div>
<div class="a" style="left:18px;top:249px;width:9px;height:3px;background:#8d8d8d"></div>
<div class="a" style="left:46px;top:219px;width:27px;height:27px;border-radius:7px;background:#fff;box-shadow:1px 2px 2px rgba(40,60,110,.45)"></div>
<svg class="a" style="left:46px;top:219px" width="27" height="27" viewBox="46 219 27 27">
  <path d="M66.5 222 C61 222.5 57.5 225.5 57 230.5 L60.5 230.5 C61 226.5 63 223.8 66.5 222Z" fill="#5b87d6"/>
  <path d="M54 230 L63.5 230 L58.7 235Z" fill="#5b87d6"/>
  <path d="M52 234 L69 241.8 M65.5 234 L48.5 241.8" stroke="#5b87d6" stroke-width="3.2" stroke-linecap="butt"/>
</svg>
<!-- google/esri -->
<div class="a" style="left:799px;top:224.5px;width:76px;height:21.5px;border:1.6px solid #3a3a3a;background:#fff"></div>
<div class="a" style="left:841.5px;top:224.5px;width:1.6px;height:21.5px;background:#3a3a3a"></div>
<span class="a" style="left:805px;top:229px;font-size:10.5px;line-height:12px;font-weight:bold;color:#111;transform:scaleX(0.93);transform-origin:0 0">Google</span>
<span class="a" style="left:849px;top:229px;font-size:10.5px;line-height:12px;color:#5c6cb2;transform:scaleX(0.95);transform-origin:0 0">ESRI</span>

<!-- table -->
<div class="a" style="left:0;top:384px;width:890px;height:161px;background:#fff"></div>
<div class="a" style="left:0;top:387px;width:873px;height:1px;background:#e4e4e4"></div>
<div class="a" style="left:0;top:387px;width:1px;height:157px;background:#dedede"></div>
<div class="a" style="left:1px;top:388px;width:872px;height:40px;background:#f5f5f5"></div>
<div class="a" style="left:1px;top:427px;width:872px;height:1px;background:#d2d2d2"></div>
<div class="a" style="left:1px;top:459px;width:872px;height:1px;background:#e2e2e2"></div>
<div class="a" style="left:101px;top:388px;width:1px;height:40px;background:#cdcdcd"></div>
<div class="a" style="left:101px;top:428px;width:1px;height:58px;background:#e2e2e2"></div>
<div class="a" style="left:201px;top:388px;width:1px;height:40px;background:#cdcdcd"></div>
<div class="a" style="left:201px;top:428px;width:1px;height:58px;background:#e2e2e2"></div>
<div class="a" style="left:301px;top:388px;width:1px;height:40px;background:#cdcdcd"></div>
<div class="a" style="left:301px;top:428px;width:1px;height:58px;background:#e2e2e2"></div>
<div class="a" style="left:401px;top:388px;width:1px;height:40px;background:#cdcdcd"></div>
<div class="a" style="left:401px;top:428px;width:1px;height:58px;background:#e2e2e2"></div>
<div class="a" style="left:501px;top:388px;width:1px;height:40px;background:#cdcdcd"></div>
<div class="a" style="left:501px;top:428px;width:1px;height:58px;background:#e2e2e2"></div>
<div class="a" style="left:601px;top:388px;width:1px;height:40px;background:#cdcdcd"></div>
<div class="a" style="left:601px;top:428px;width:1px;height:58px;background:#e2e2e2"></div>
<div class="a" style="left:701px;top:388px;width:1px;height:40px;background:#cdcdcd"></div>
<div class="a" style="left:701px;top:428px;width:1px;height:58px;background:#e2e2e2"></div>
<div class="a" style="left:801px;top:388px;width:1px;height:40px;background:#cdcdcd"></div>
<div class="a" style="left:801px;top:428px;width:1px;height:58px;background:#e2e2e2"></div>
<span class="hd" style="left:11px;width:85px">the_geom</span>
<span class="hd" style="left:112px;width:70px">mapblklot</span>
<svg class="a" style="left:184px;top:401px" width="4" height="14"><circle cx="2" cy="2" r="1.6" fill="#666"/><circle cx="2" cy="7" r="1.6" fill="#666"/><circle cx="2" cy="12" r="1.6" fill="#666"/></svg>
<span class="hd" style="left:211px;width:70px">blklot</span>
<svg class="a" style="left:284px;top:401px" width="4" height="14"><circle cx="2" cy="2" r="1.6" fill="#666"/><circle cx="2" cy="7" r="1.6" fill="#666"/><circle cx="2" cy="12" r="1.6" fill="#666"/></svg>
<span class="hd" style="left:311px;width:66px;-webkit-mask-image:linear-gradient(90deg,#000 80%,transparent)">block_num</span>
<svg class="a" style="left:384px;top:401px" width="4" height="14"><circle cx="2" cy="2" r="1.6" fill="#666"/><circle cx="2" cy="7" r="1.6" fill="#666"/><circle cx="2" cy="12" r="1.6" fill="#666"/></svg>
<span class="hd" style="left:411px;width:70px">lot_num</span>
<svg class="a" style="left:484px;top:401px" width="4" height="14"><circle cx="2" cy="2" r="1.6" fill="#666"/><circle cx="2" cy="7" r="1.6" fill="#666"/><circle cx="2" cy="12" r="1.6" fill="#666"/></svg>
<span class="hd" style="left:511px;width:70px">from_st</span>
<svg class="a" style="left:584px;top:401px" width="4" height="14"><circle cx="2" cy="2" r="1.6" fill="#666"/><circle cx="2" cy="7" r="1.6" fill="#666"/><circle cx="2" cy="12" r="1.6" fill="#666"/></svg>
<span class="hd" style="left:611px;width:70px">to_st</span>
<svg class="a" style="left:684px;top:401px" width="4" height="14"><circle cx="2" cy="2" r="1.6" fill="#666"/><circle cx="2" cy="7" r="1.6" fill="#666"/><circle cx="2" cy="12" r="1.6" fill="#666"/></svg>
<span class="hd" style="left:711px;width:70px">street</span>
<svg class="a" style="left:784px;top:401px" width="4" height="14"><circle cx="2" cy="2" r="1.6" fill="#666"/><circle cx="2" cy="7" r="1.6" fill="#666"/><circle cx="2" cy="12" r="1.6" fill="#666"/></svg>
<span class="hd" style="left:811px;width:85px">st_type</span>
<span class="cl el" style="left:9px;top:437px">MULTIPOLYG…</span>
<span class="cl dg" style="left:109px;top:437px">0027001</span>
<span class="cl dg" style="left:209px;top:437px">0027001</span>
<span class="cl dg" style="left:301px;top:437px;width:96px;text-align:right">27</span>
<span class="cl dg" style="left:409px;top:437px">001</span>
<span class="cl dg" style="left:509px;top:437px">715</span>
<span class="cl cp" style="left:709px;top:437px">NORTH POINT</span>
<span class="cl cp" style="left:809px;top:437px">ST</span>
<span class="cl el" style="left:9px;top:468px">MULTIPOLYG…</span>
<span class="cl dg" style="left:109px;top:468px">0027001A</span>
<span class="cl dg" style="left:209px;top:468px">0027001A</span>
<span class="cl dg" style="left:301px;top:468px;width:96px;text-align:right">27</span>
<span class="cl dg" style="left:409px;top:468px">001A</span>
<span class="cl dg" style="left:509px;top:468px">2647</span>
<span class="cl el" style="left:709px;top:468px">LEAVENWOR…</span>
<span class="cl cp" style="left:809px;top:468px">ST</span>
<div class="a" style="left:1px;top:486px;width:888px;height:15px;background:#efefef"></div>
<div class="a" style="left:4px;top:489px;width:275px;height:10px;border-radius:5px;background:#bdbdbd"></div>
<div class="a" style="left:0;top:500px;width:889px;height:1px;background:#e6e6e6"></div>
<div class="a" style="left:873px;top:388px;width:16px;height:98px;background:#f1f1f1"></div>
<div class="a" style="left:876px;top:391px;width:10px;height:26px;border-radius:5px;background:#bdbdbd"></div>
<div class="a" style="left:889px;top:384px;width:1px;height:160px;background:#e4e4e4"></div>
<svg class="a" style="left:14px;top:515px" width="12" height="15"><path d="M9 1.5 L2.5 7.5 L9 13.5" fill="none" stroke="#555" stroke-width="1.3"/></svg>
<span class="a" style="left:32px;top:511px;font-size:18px;line-height:20px;color:#555">Previous</span>
<span class="a" style="left:131px;top:511px;font-size:18px;line-height:20px;color:#1f7ab5">Next</span>
<svg class="a" style="left:175px;top:515px" width="12" height="15"><path d="M3 1.5 L9.5 7.5 L3 13.5" fill="none" stroke="#1f7ab5" stroke-width="1.3"/></svg>
<span class="a" style="left:621px;top:513px;font-size:16px;line-height:18px;color:#555;transform:scaleX(0.973);transform-origin:0 0">Showing rows 1 to 100 out of 155,395</span>

<!-- about panel -->
<div class="a" style="left:890px;top:195px;width:391px;height:351px;background:#f7f7f7"></div>
<div class="a" style="left:890px;top:195px;width:391px;height:36px;background:#cf6574"></div>
<span class="a" style="left:902px;top:204px;font-size:15px;line-height:17px;color:#f6e6e9;-webkit-text-stroke:0.5px #cf6574;transform:scaleX(0.91);transform-origin:0 0">About This Dataset</span>
<svg class="a" style="left:1263px;top:206px" width="10" height="10" viewBox="0 0 10 10"><path d="M1.5 1.5L8.5 8.5M8.5 1.5L1.5 8.5" stroke="#fff" stroke-width="2.2"/></svg>
<div class="a" style="left:898px;top:231px;width:1px;height:314px;background:#dadada"></div>
<div class="a" style="left:914px;top:231px;width:2px;height:314px;background:#e2e2e2"></div>
<div class="a" style="left:1252px;top:231px;width:1px;height:314px;background:#c9c9c9"></div>
<div class="a" style="left:1264px;top:231px;width:16px;height:314px;background:#f0f0f0"></div>
<div class="a" style="left:1267px;top:253px;width:10px;height:31px;border-radius:5px;background:#c1c1c1"></div>
<div class="a" style="left:919.6px;top:237.5px;width:321px;height:307.2px;border:3px solid #fb1f00;background:#f7f7f7"></div>
<div class="a" style="left:1236px;top:231px;width:1px;height:6.5px;background:#d4d4d4"></div>
<div class="a" style="left:1236px;top:240.5px;width:1px;height:301px;background:#d4d4d4"></div>
<div class="a" style="left:930px;top:258.8px;width:305px;height:282.2px;overflow:hidden;font-size:13px;line-height:13px;color:#222">
<div style="white-space:nowrap;height:13px;transform:scaleX(0.985);transform-origin:0 0">Land Use 2020</div>
<div style="white-space:nowrap;height:13px;transform:scaleX(0.987);transform-origin:0 0">Land use categories for every parcel in San</div>
<div style="white-space:nowrap;height:13px;transform:scaleX(0.988);transform-origin:0 0">Francisco. The land use categories are derived</div>
<div style="white-space:nowrap;height:13px;transform:scaleX(1);transform-origin:0 0">from a range of City and commercial databases.</div>
<div style="white-space:nowrap;height:13px;transform:scaleX(1);transform-origin:0 0">Where building square footages were missing</div>
<div style="white-space:nowrap;height:13px;transform:scaleX(1);transform-origin:0 0">from these databases they were derived from a</div>
<div style="white-space:nowrap;height:13px;transform:scaleX(0.984);transform-origin:0 0">LIDAR survey flown in 2007.</div>
<div style="height:13px"></div>
<div style="white-space:nowrap;height:13px;transform:scaleX(1);transform-origin:0 0">Land use categories are as follows (units are</div>
<div style="white-space:nowrap;height:13px;transform:scaleX(1);transform-origin:0 0">square feet):</div>
<div style="white-space:nowrap;height:13px;transform:scaleX(0.987);transform-origin:0 0">CIE = Cultural, Institutional, Educational</div>
<div style="white-space:nowrap;height:13px;transform:scaleX(0.994);transform-origin:0 0">MED = Medical</div>
<div style="white-space:nowrap;height:13px;transform:scaleX(1);transform-origin:0 0">MIPS = Office (Management, Information,</div>
<div style="white-space:nowrap;height:13px;transform:scaleX(1);transform-origin:0 0">Professional Services)</div>
<div style="white-space:nowrap;height:13px;transform:scaleX(0.983);transform-origin:0 0">MIXED = Mixed Uses (Without Residential)</div>
<div style="white-space:nowrap;height:13px;transform:scaleX(0.973);transform-origin:0 0">MIXRES = Mixed Uses (With Residential)</div>
<div style="white-space:nowrap;height:13px;transform:scaleX(0.983);transform-origin:0 0">PDR = Industrial (Production, Distribution, Repair)</div>
<div style="white-space:nowrap;height:13px;transform:scaleX(0.971);transform-origin:0 0">RETAIL/ENT = Retail, Entertainment</div>
<div style="white-space:nowrap;height:13px;transform:scaleX(0.938);transform-origin:0 0">RESIDENT = Residential</div>
<div style="white-space:nowrap;height:13px;transform:scaleX(0.983);transform-origin:0 0">VISITOR = Hotels/Motels</div>
<div style="white-space:nowrap;height:13px;transform:scaleX(0.976);transform-origin:0 0">VACANT = Vacant</div>
<div style="white-space:nowrap;height:13px;transform:scaleX(0.942);transform-origin:0 0">ROW = Right-of-Way</div>
</div>


<!-- frame -->
<div class="a" style="left:0;top:0;width:1281px;height:1px;background:#ececec"></div>
<div class="a" style="left:1280px;top:0;width:1px;height:546px;background:linear-gradient(#c832c4,#6c14c4)"></div>
<div class="a" style="left:0;top:545px;width:1280px;height:1px;background:#2e86ae"></div>
<div class="a" style="left:920px;top:545px;width:321px;height:1px;background:#8d6464"></div>
</body></html>
